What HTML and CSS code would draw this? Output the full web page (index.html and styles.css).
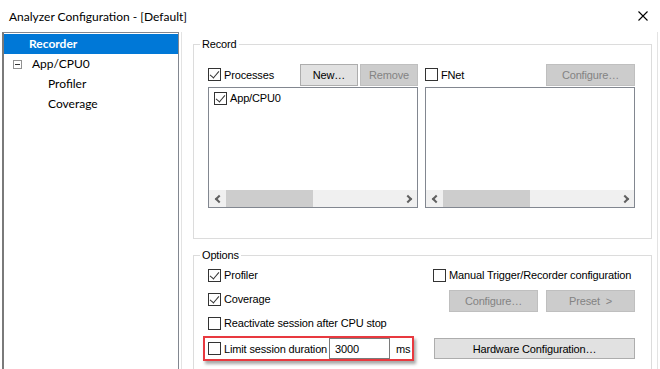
FILE: index.html
```html
<!DOCTYPE html>
<html lang="en">
<head>
    <meta charset="UTF-8">
    <title>Analyzer Configuration</title>
    <link rel="stylesheet" href="styles.css">
</head>
<body>
    <div class="window">
        <div class="titlebar">
            <div class="title">Analyzer Configuration - [Default]</div>
            <svg class="close" width="10" height="10" viewBox="0 0 10 10">
                <path d="M0.5 0.5 L9.5 9.5 M9.5 0.5 L0.5 9.5" stroke="#000" stroke-width="1.1" fill="none"/>
            </svg>
        </div>

        <div class="main">
            <!-- navigation tree -->
            <div class="tree">
                <div class="tree-row selected">Recorder</div>
                <div class="tree-row parent">
                    <span class="toggle"></span>App/CPU0
                </div>
                <div class="tree-row child">Profiler</div>
                <div class="tree-row child">Coverage</div>
            </div>

            <div class="panel">
                <fieldset class="group">
                    <legend>Record</legend>
                    <div class="record-body">
                        <div class="record-col">
                            <div class="record-head">
                                <label class="check"><span class="box checked"></span>Processes</label>
                                <div class="btn-pair">
                                    <button class="btn btn-small">New…</button>
                                    <button class="btn btn-small" disabled>Remove</button>
                                </div>
                            </div>
                            <div class="listbox">
                                <div class="list-items">
                                    <label class="check list-item"><span class="box checked"></span>App/CPU0</label>
                                </div>
                                <div class="hscroll">
                                    <span class="arrow left"></span>
                                    <span class="thumb"></span>
                                    <span class="arrow right"></span>
                                </div>
                            </div>
                        </div>
                        <div class="record-col">
                            <div class="record-head">
                                <label class="check"><span class="box"></span>FNet</label>
                                <button class="btn btn-wide" disabled>Configure…</button>
                            </div>
                            <div class="listbox">
                                <div class="list-items"></div>
                                <div class="hscroll">
                                    <span class="arrow left"></span>
                                    <span class="thumb"></span>
                                    <span class="arrow right"></span>
                                </div>
                            </div>
                        </div>
                    </div>
                </fieldset>

                <fieldset class="group options">
                    <legend>Options</legend>
                    <div class="options-body">
                        <label class="check opt"><span class="box checked"></span>Profiler</label>
                        <label class="check"><span class="box"></span>Manual Trigger/Recorder configuration</label>

                        <label class="check opt"><span class="box checked"></span>Coverage</label>
                        <div class="btn-row">
                            <button class="btn btn-wide" disabled>Configure…</button>
                            <button class="btn btn-wide" disabled>Preset &nbsp;&gt;</button>
                        </div>

                        <label class="check opt"><span class="box"></span>Reactivate session after CPU stop</label>
                        <div></div>

                        <div class="highlight">
                            <label class="check"><span class="box"></span>Limit session duration</label>
                            <input class="num" type="text" value="3000">
                            <span class="unit">ms</span>
                        </div>
                        <button class="btn btn-hw">Hardware Configuration…</button>
                    </div>
                </fieldset>
            </div>
        </div>
    </div>
</body>
</html>
```

FILE: styles.css
```css
* {
    margin: 0;
    padding: 0;
    box-sizing: border-box;
}

body {
    font-family: 'Lato', 'Noto Sans', sans-serif;
    font-size: 12px;
    color: #000;
    background: #fff;
}

.window {
    width: 660px;
    height: 369px;
    overflow: hidden;
    background: #fff;
}

.titlebar {
    height: 32px;
    display: flex;
    align-items: center;
    justify-content: space-between;
    padding: 0 12px 0 9px;
}

.title {
    font-size: 12px;
}

.main {
    display: flex;
    height: 337px;
    padding-left: 2px;
}

/* tree on the left */
.tree {
    width: 177px;
    border: 1px solid #828790;
    border-left: 2px solid #7a7a7a;
    border-bottom: none;
    padding-top: 1px;
}

.tree-row {
    height: 20px;
    line-height: 20px;
    padding-left: 25px;
    white-space: nowrap;
}

.tree-row.selected {
    background: #0078d7;
    color: #fff;
    font-weight: bold;
}

.tree-row.parent {
    padding-left: 9px;
    display: flex;
    align-items: center;
}

.tree-row.child {
    padding-left: 44px;
}

.toggle {
    width: 9px;
    height: 9px;
    border: 1px solid #919191;
    margin-right: 10px;
    position: relative;
}

.toggle::after {
    content: '';
    position: absolute;
    left: 1px;
    top: 3px;
    width: 5px;
    height: 1px;
    background: #333;
}

/* right panel, classic control font */
.panel {
    width: 477px;
    margin-left: 2px;
    border-left: 1px solid #e3e3e3;
    border-right: 1px solid #e3e3e3;
    padding: 4px 0 0 11px;
    font-family: 'Liberation Sans', Arial, sans-serif;
    font-size: 11px;
    letter-spacing: -0.15px;
}

.group {
    width: 459px;
    border: 1px solid #dcdcdc;
}

.group legend {
    margin-left: 6px;
    padding: 0 2px;
    line-height: 16px;
}

.record-body {
    display: flex;
    gap: 7px;
    padding: 12px 0 30px 14px;
}

.record-col {
    width: 210px;
}

.record-head {
    height: 21px;
    display: flex;
    align-items: center;
    justify-content: space-between;
}

.btn-pair {
    display: flex;
    gap: 2px;
}

.listbox {
    margin-top: 2px;
    height: 121px;
    border: 1px solid #828790;
    display: flex;
    flex-direction: column;
}

.list-items {
    flex: 1;
    padding: 2px 5px;
}

.list-item {
    height: 16px;
}

.hscroll {
    height: 17px;
    background: #f0f0f0;
    display: flex;
    align-items: stretch;
}

.hscroll .arrow {
    width: 17px;
    position: relative;
}

.hscroll .arrow::after {
    content: '';
    position: absolute;
    top: 6px;
    width: 4px;
    height: 4px;
    border-left: 2px solid #606060;
    border-bottom: 2px solid #606060;
}

.hscroll .arrow.left::after {
    left: 7px;
    transform: rotate(45deg);
}

.hscroll .arrow.right::after {
    left: 5px;
    transform: rotate(-135deg);
}

.hscroll .thumb {
    width: 87px;
    background: #cdcdcd;
}

.hscroll .right {
    margin-left: auto;
}

/* check boxes */
.check {
    display: flex;
    align-items: center;
    gap: 3px;
    white-space: nowrap;
}

.box {
    width: 13px;
    height: 13px;
    border: 1px solid #333;
    background: #fff;
    position: relative;
    flex-shrink: 0;
}

.box.checked::after {
    content: '';
    position: absolute;
    left: 3px;
    top: 0px;
    width: 4px;
    height: 8px;
    border-right: 1px solid #333;
    border-bottom: 1px solid #333;
    transform: rotate(40deg);
}

/* buttons */
.btn {
    font-family: inherit;
    font-size: 11px;
    letter-spacing: inherit;
    height: 22px;
    background: #e1e1e1;
    border: 1px solid #adadad;
    color: #000;
}

.btn:disabled {
    background: #cccccc;
    border-color: #bfbfbf;
    color: #838383;
}

.btn-small {
    width: 58px;
}

.btn-wide {
    width: 89px;
}

.btn-hw {
    width: 201px;
    height: 21px;
}

/* options */
.options {
    margin-top: 8px;
}

.options-body {
    display: grid;
    grid-template-columns: 230px 202px;
    grid-template-rows: 24px 24px 24px 27px;
    align-items: center;
    padding: 0 0 10px 9px;
}

.opt {
    padding-left: 5px;
}

.btn-row {
    display: flex;
    gap: 8px;
    padding-left: 16px;
    margin-top: 4px;
}

.options-body .btn-hw {
    margin-left: 1px;
}

.highlight {
    width: 211px;
    height: 25px;
    border: 2px solid #e8393f;
    box-shadow: 2px 3px 3px rgba(0, 0, 0, 0.35);
    display: flex;
    align-items: center;
    padding-left: 3px;
}

.num {
    font-family: inherit;
    font-size: 11px;
    letter-spacing: inherit;
    width: 61px;
    height: 21px;
    border: 1px solid #7a7a7a;
    padding-left: 5px;
    margin-left: 2px;
}

.unit {
    margin-left: 6px;
}
```
